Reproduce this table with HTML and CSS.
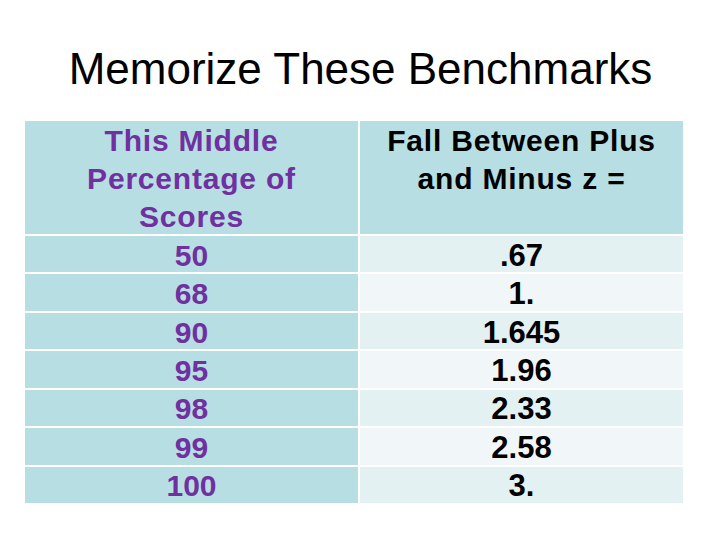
FILE: index.html
```html
<!DOCTYPE html>
<html>
<head>
<meta charset="utf-8">
<link rel="stylesheet" href="styles.css">
</head>
<body>
<div class="slide">
  <h1 class="title">Memorize These Benchmarks</h1>
  <div class="table">
    <div class="cell left head">This Middle<br>Percentage of<br>Scores</div>
    <div class="cell right head">Fall Between Plus<br>and Minus z =</div>
    <div class="cell left">50</div><div class="cell right odd">.67</div>
    <div class="cell left">68</div><div class="cell right even">1.</div>
    <div class="cell left">90</div><div class="cell right odd">1.645</div>
    <div class="cell left">95</div><div class="cell right even">1.96</div>
    <div class="cell left">98</div><div class="cell right odd">2.33</div>
    <div class="cell left">99</div><div class="cell right even">2.58</div>
    <div class="cell left">100</div><div class="cell right odd">3.</div>
  </div>
</div>
</body>
</html>
```
FILE: styles.css
```css
html, body {
  margin: 0;
  padding: 0;
  background: #ffffff;
}
.slide {
  width: 720px;
  height: 540px;
  font-family: "Liberation Sans", Arial, sans-serif;
  padding-top: 44px;
  box-sizing: border-box;
}
.title {
  margin: 0;
  font-size: 44px;
  font-weight: normal;
  line-height: 50px;
  text-align: center;
  color: #000000;
  padding-left: 1px;
}
.table {
  margin-top: 27px;
  margin-left: 25px;
  width: 658px;
  height: 382px;
  display: grid;
  grid-template-columns: 333px 323px;
  grid-template-rows: 113px repeat(7, minmax(0, 1fr));
  column-gap: 2px;
  row-gap: 2px;
}
.cell {
  display: flex;
  align-items: center;
  justify-content: center;
  text-align: center;
  font-weight: bold;
  line-height: 30px;
  padding-top: 3px;
  box-sizing: border-box;
  min-height: 0;
}
.left {
  background: #b7dee3;
  color: #7030a0;
  font-size: 30px;
}
.right {
  color: #000000;
  font-size: 31px;
}
.head {
  align-items: flex-start;
  font-size: 30px;
  letter-spacing: 0.8px;
  line-height: 38px;
  padding-top: 1px;
}
.right.head {
  background: #b7dee3;
}
.odd {
  background: #e4f1f3;
}
.even {
  background: #f1f7f9;
}
```
